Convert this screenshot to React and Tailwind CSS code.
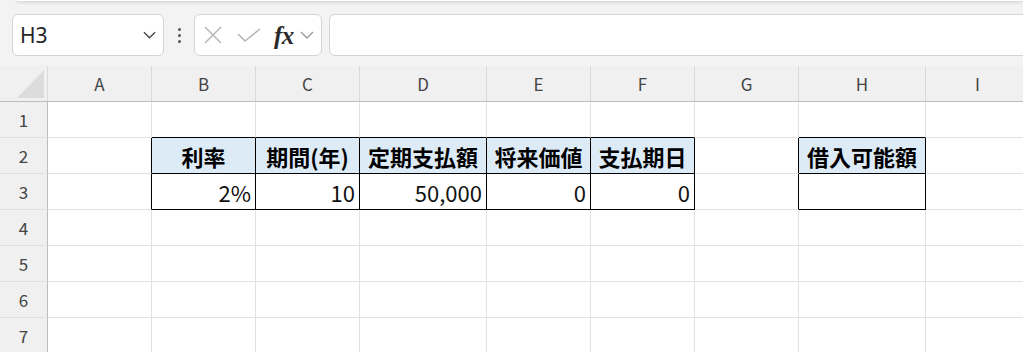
const COLS = [
  { id: 'A', w: 'w-[104px]' },
  { id: 'B', w: 'w-[104px]' },
  { id: 'C', w: 'w-[104px]' },
  { id: 'D', w: 'w-[127px]' },
  { id: 'E', w: 'w-[104px]' },
  { id: 'F', w: 'w-[104px]' },
  { id: 'G', w: 'w-[104px]' },
  { id: 'H', w: 'w-[127px]' },
  { id: 'I', w: 'w-[104px]' },
];

const HEADERS = { B: '利率', C: '期間(年)', D: '定期支払額', E: '将来価値', F: '支払期日', H: '借入可能額' };
const VALUES = { B: '2%', C: '10', D: '50,000', E: '0', F: '0', H: '' };
const TABLE_COLS = ['B', 'C', 'D', 'E', 'F', 'H'];
const LEFT_EDGE = ['A', 'B', 'C', 'D', 'E', 'F', 'G', 'H'];

function Cell({ col, row }) {
  const inTable = TABLE_COLS.includes(col.id) && (row === 2 || row === 3);
  const rightBlack = (row === 2 || row === 3) && LEFT_EDGE.includes(col.id);
  const bottomBlack = TABLE_COLS.includes(col.id) && row >= 1 && row <= 3;

  const cls = [
    col.w,
    'shrink-0 h-full border-r border-b flex items-center text-[22px] leading-none whitespace-nowrap',
    rightBlack ? 'border-r-black' : 'border-r-[#e1e1e1]',
    bottomBlack ? 'border-b-black' : 'border-b-[#e1e1e1]',
    inTable && row === 2 ? 'bg-[#ddebf7] justify-center font-bold text-black' : '',
    inTable && row === 3 ? 'justify-end pr-[4px] text-[#111]' : '',
  ].join(' ');

  let text = '';
  if (inTable && row === 2) text = HEADERS[col.id];
  if (inTable && row === 3) text = VALUES[col.id];

  return <div className={cls}>{text}</div>;
}

function Chevron({ className }) {
  return (
    <svg viewBox="0 0 14 8" className={className} fill="none" stroke="currentColor" strokeWidth="1.4">
      <polyline points="1,1 7,7 13,1" />
    </svg>
  );
}

export default function App() {
  const rows = [1, 2, 3, 4, 5, 6, 7];

  return (
    <div className="w-[1023px] h-[352px] overflow-hidden bg-white font-['Noto_Sans_CJK_JP','Noto_Sans',sans-serif]">
      {/* toolbar / formula bar */}
      <div className="h-[66px] bg-[#f3f3f3] flex flex-col">
        <div className="ml-[16px] h-[2px] bg-white border-b border-[#dcdcdc] rounded-bl-[6px] shadow-[0_1px_3px_rgba(0,0,0,0.12)]" />
        <div className="mt-[12px] h-[42px] flex items-center">
          <div className="ml-[12px] w-[152px] shrink-0 h-full bg-white border border-[#d4d4d4] rounded-[6px] flex items-center pl-[7px] pr-[7px]">
            <span className="text-[21px] text-[#262626] font-['Noto_Sans','Liberation_Sans',sans-serif] leading-none">H3</span>
            <Chevron className="ml-auto w-[13px] h-[8px] text-[#424242]" />
          </div>
          <div className="w-[30px] shrink-0 flex flex-col items-center gap-[3px]">
            <span className="w-[3px] h-[3px] rounded-full bg-[#555]" />
            <span className="w-[3px] h-[3px] rounded-full bg-[#555]" />
            <span className="w-[3px] h-[3px] rounded-full bg-[#555]" />
          </div>
          <div className="w-[128px] shrink-0 h-full bg-white border border-[#d4d4d4] rounded-[6px] flex items-center pl-[9px]">
            <svg viewBox="0 0 18 18" className="w-[18px] h-[18px] text-[#b5b5b5]" fill="none" stroke="currentColor" strokeWidth="1.5">
              <line x1="1" y1="1" x2="17" y2="17" />
              <line x1="17" y1="1" x2="1" y2="17" />
            </svg>
            <svg viewBox="0 0 24 14" className="ml-[15px] w-[24px] h-[14px] text-[#b5b5b5]" fill="none" stroke="currentColor" strokeWidth="1.5">
              <polyline points="1,6 8,13 23,1" />
            </svg>
            <span className="ml-[13px] text-[25px] leading-none italic font-bold text-[#2a2a2a] font-['Liberation_Serif',serif] tracking-[-0.5px]">fx</span>
            <Chevron className="ml-[6px] w-[14px] h-[8px] text-[#9a9a9a]" />
          </div>
          <div className="ml-[7px] w-[720px] h-full bg-white border border-[#d4d4d4] rounded-[6px] shrink-0" />
        </div>
      </div>

      {/* column header */}
      <div className="h-[36px] flex bg-[#f0f0f0] border-b border-[#bdbdbd]">
        <div className="w-[48px] shrink-0 h-full border-r border-[#dadada] flex items-end justify-end pr-[3px] pb-[3px]">
          <div className="w-[27px] h-[28px] bg-[#dcdcdc] [clip-path:polygon(100%_0,100%_100%,0_100%)]" />
        </div>
        {COLS.map((c) => (
          <div key={c.id} className={`${c.w} shrink-0 h-full border-r border-[#dadada] flex items-center justify-center text-[17px] text-[#444]`}>
            {c.id}
          </div>
        ))}
      </div>

      {/* rows */}
      {rows.map((r) => (
        <div key={r} className="h-[36px] flex">
          <div className="w-[48px] shrink-0 h-full bg-[#f0f0f0] border-r border-r-[#bdbdbd] border-b border-b-[#e1e1e1] flex items-center justify-center text-[17px] text-[#444]">
            {r}
          </div>
          {COLS.map((c) => (
            <Cell key={c.id} col={c} row={r} />
          ))}
        </div>
      ))}
    </div>
  );
}
